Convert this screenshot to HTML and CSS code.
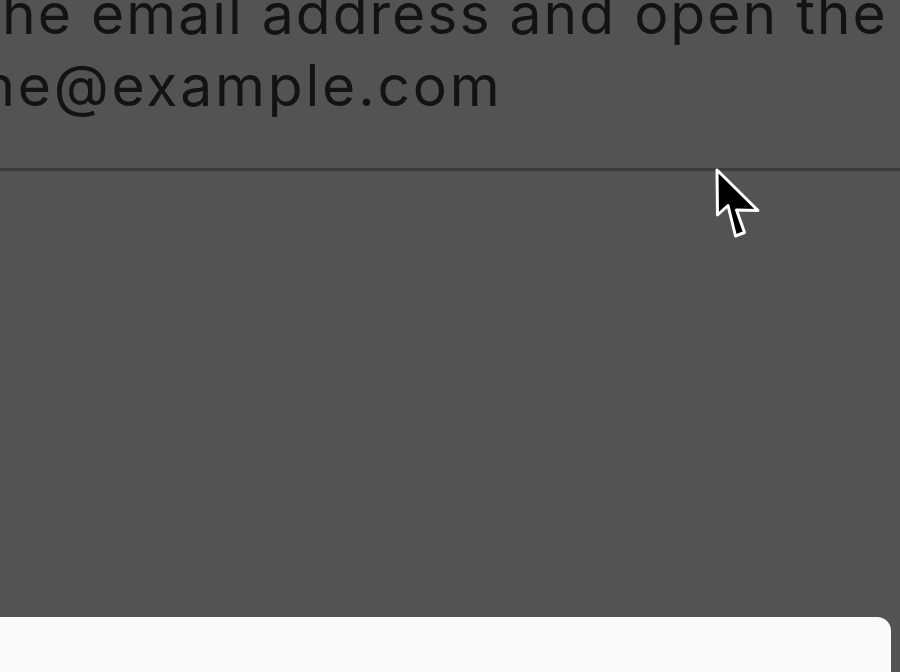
FILE: index.html
```html
<!DOCTYPE html>
<html>
<head>
<meta charset="utf-8">
<link rel="stylesheet" href="styles.css">
</head>
<body>
<div class="screen">
  <div class="field">
    <div class="line line-one">he email address and open the</div>
    <div class="line line-two">me@example.com</div>
  </div>
  <div class="spacer"></div>
  <div class="sheet"></div>
  <svg class="cursor" width="50" height="76" viewBox="-4 -4 50 76" aria-hidden="true">
    <path d="M0 0 L0.5 45 L11 35.5 L18.5 66 L27.5 62.5 L19.5 40 L41 40.5 Z" fill="#000" stroke="#fff" stroke-width="3" stroke-linejoin="round"/>
  </svg>
</div>
</body>
</html>
```
FILE: styles.css
```css
html, body {
  margin: 0;
  padding: 0;
  width: 900px;
  height: 672px;
  overflow: hidden;
  background: #535353;
}
.screen {
  position: relative;
  width: 900px;
  height: 672px;
  display: flex;
  flex-direction: column;
  overflow: hidden;
}
.field {
  border-bottom: 3px solid #3b3b3b;
  height: 168px;
  box-sizing: content-box;
  overflow: hidden;
}
.line {
  font-family: Inter, "Noto Sans", sans-serif;
  font-size: 57px;
  letter-spacing: 2px;
  color: #131313;
  white-space: nowrap;
  line-height: 70px;
}
.line-one {
  margin-top: -21px;
  padding-left: 2px;
}
.line-two {
  margin-top: 2px;
  margin-left: -35px;
  letter-spacing: 2.8px;
}
.spacer {
  height: 446px;
  flex: none;
}
.sheet {
  flex: 1;
  margin-left: -20px;
  margin-right: 9px;
  background: #fafafa;
  border-radius: 14px 14px 0 0;
}
.cursor {
  position: absolute;
  left: 713px;
  top: 166px;
}
```
